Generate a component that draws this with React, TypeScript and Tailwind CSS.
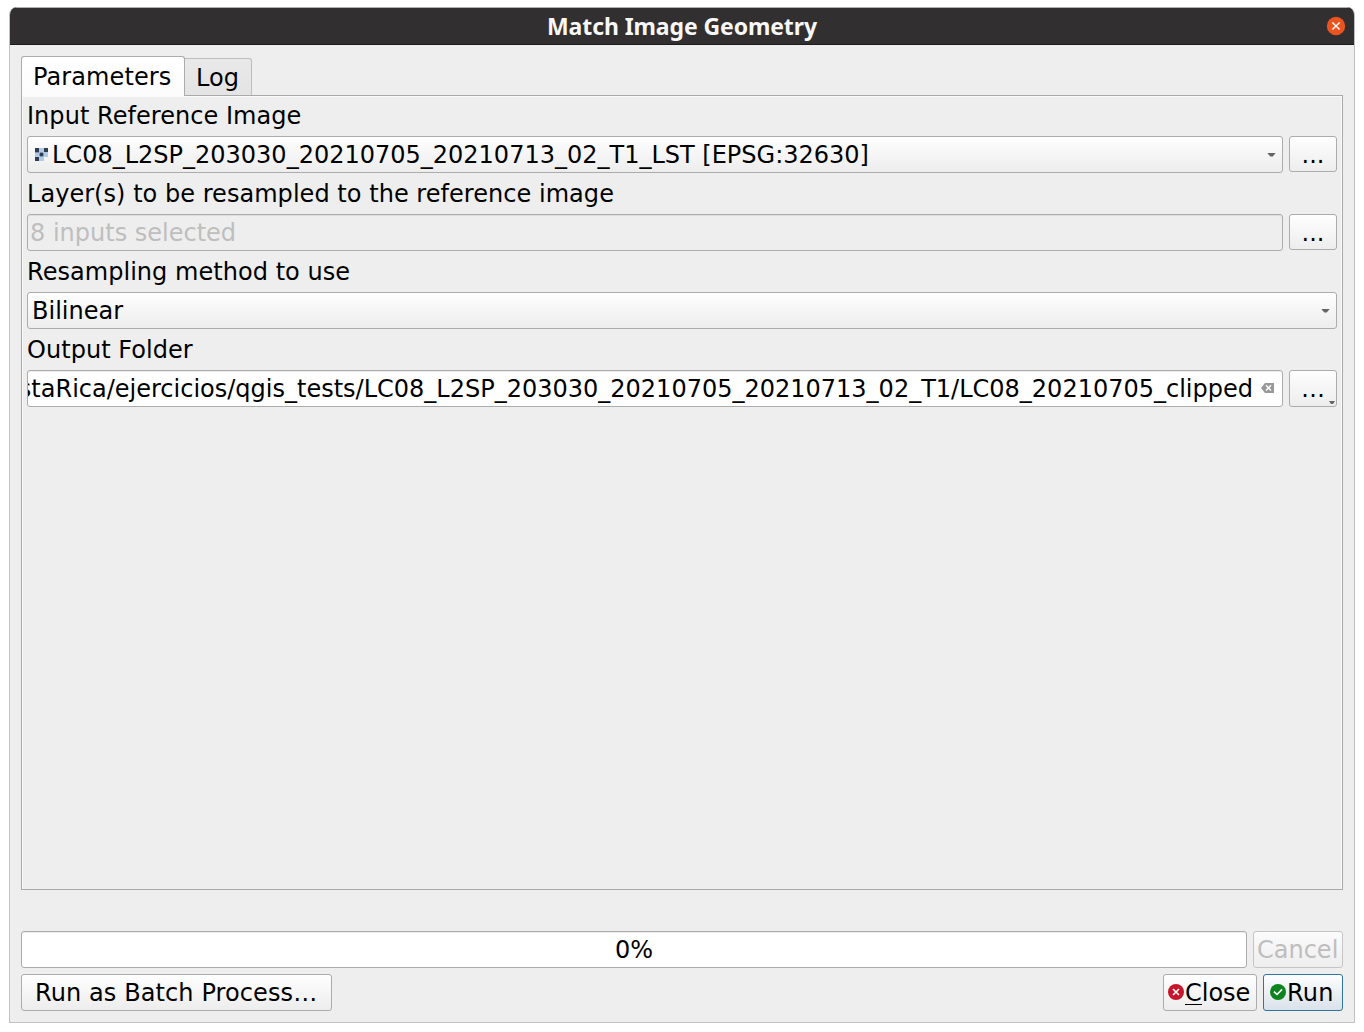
import type { ReactNode } from "react";

const raised =
  "relative flex shrink-0 items-center rounded-[3px] border border-[#acacac] bg-linear-to-b from-[#fefefe] to-[#ededed]";

function Label({ children, first = false }: { children: ReactNode; first?: boolean }) {
  return (
    <div className={"flex items-center tracking-[0.04px] " + (first ? "h-10 pb-px" : "h-[41px]")}>
      {children}
    </div>
  );
}

function Arrow() {
  return (
    <svg className="absolute top-[16px] right-[6px]" width="9" height="4" viewBox="0 0 9 4">
      <path d="M0.3 0H8.7L5.7 3.6H3.3Z" fill="#656565" />
    </svg>
  );
}

function Dots({ menu = false }: { menu?: boolean }) {
  return (
    <button className={raised + " w-12 justify-center " + (menu ? "h-[37px]" : "h-9")}>
      <span className={menu ? "" : "pt-px"}>{menu ? "…" : "..."}</span>
      {menu && (
        <svg className="absolute right-[1px] bottom-[2px]" width="6" height="3" viewBox="0 0 6 3">
          <path d="M0 0H6L4 3H2Z" fill="#656565" />
        </svg>
      )}
    </button>
  );
}

function RasterIcon() {
  return (
    <svg width="13" height="13" viewBox="0 0 13 13" shapeRendering="crispEdges">
      <rect width="13" height="13" fill="#b3cae6" />
      <path d="M0 0h4v4H0zM9 0h4v4H9zM0 9h4v4H0z" fill="#2f3e50" />
      <path d="M5 5h3v3H5z" fill="#2f3e50" />
      <path d="M0 4h4v1H0zM4 5h1v3H4zM8 5h1v3H8zM5 4h3v1H5zM5 8h3v1H5z" fill="#8297b2" />
      <path d="M9 9h4v4H9z" fill="#f5f5f5" />
    </svg>
  );
}

export default function App() {
  return (
    <div className="h-[1032px] w-[1364px] overflow-hidden bg-white pt-[7px] pl-[9px] font-['DejaVu_Sans',sans-serif] text-[24px] leading-[28px] whitespace-nowrap text-black">
      <div className="flex h-[1016px] w-[1346px] flex-col overflow-hidden rounded-t-[8px] border border-t-0 border-[#c1c1c1] bg-[#eeeeee]">
        <header className="relative flex h-[38px] shrink-0 items-center justify-center border-t border-b border-t-[#b0b0b0] border-b-[#1c1b1b] bg-[#322f30] pb-px font-['Noto_Sans',sans-serif] text-[23px] font-bold text-[#f7f7f7]">
          <span className="tracking-[-0.1px]">Match Image Geometry</span>
          <svg className="absolute top-[8px] right-[8px]" width="20" height="20" viewBox="0 0 20 20">
            <circle cx="10" cy="10" r="9.2" fill="#e95420" />
            <path d="M6.4 6.4L13.6 13.6M13.6 6.4L6.4 13.6" stroke="#fff" strokeWidth="1.4" />
          </svg>
        </header>

        <main className="flex flex-1 flex-col px-[11px] pt-[11px]">
          <nav className="relative z-10 -mb-px flex h-10 items-end">
            <div className="flex h-10 w-[164px] items-center rounded-t-[3px] border border-b-0 border-[#acacac] bg-linear-to-b from-white to-[#fbfbfb] pl-[11px] tracking-[0.1px]">
              Parameters
            </div>
            <div className="mb-px flex h-[37px] w-[67px] items-center rounded-tr-[3px] border border-b-0 border-l-0 border-[#bdbdbd] bg-linear-to-b from-[#e9e9e9] to-[#e4e4e4] pt-[2px] pl-[11px]">
              Log
            </div>
          </nav>
          <section className="h-[795px] border border-[#a9a9a9] px-[5px] shadow-[inset_1px_1px_0_#fafafa,inset_-1px_0_0_#fafafa]">
            <Label first>Input Reference Image</Label>
            <div className="flex h-[37px] gap-[6px]">
              <div className={raised + " h-[37px] w-[1256px] gap-[4px] pl-[7px]"}>
                <RasterIcon />
                <span>LC08_L2SP_203030_20210705_20210713_02_T1_LST [EPSG:32630]</span>
                <Arrow />
              </div>
              <Dots />
            </div>
            <Label>Layer(s) to be resampled to the reference image</Label>
            <div className="flex h-[37px] gap-[6px]">
              <div className="flex h-[37px] w-[1256px] items-center rounded-[3px] border border-[#acacac] bg-[#eeeeee] pl-[2px] text-[#bebebe] shadow-[inset_0_1px_0_#dedede]">
                8 inputs selected
              </div>
              <Dots />
            </div>
            <Label>Resampling method to use</Label>
            <div className={raised + " h-[37px] pl-[4px]"}>
              Bilinear
              <Arrow />
            </div>
            <Label>Output Folder</Label>
            <div className="flex h-[37px] gap-[6px]">
              <div className="flex h-[37px] w-[1256px] items-center rounded-[3px] border border-[#acacac] bg-white pr-[7px] shadow-[inset_0_1px_0_#ededed]">
                <div className="flex flex-1 justify-end overflow-hidden">
                  <span>staRica/ejercicios/qgis_tests/LC08_L2SP_203030_20210705_20210713_02_T1/LC08_20210705_clipped</span>
                </div>
                <svg className="mr-px mb-[1px] ml-[8px] shrink-0" width="13" height="10" viewBox="0 0 13 10">
                  <path d="M4 0H13V10H4L0 5Z" fill="#989898" />
                  <path d="M5 2.3L10 7.5M10 2.3L5 7.5" stroke="#fff" strokeWidth="1.4" />
                </svg>
              </div>
              <Dots menu />
            </div>
          </section>

          <div className="mt-[41px] flex h-[37px] gap-[6px]">
            <div className="flex w-[1226px] items-center justify-center rounded-[3px] border border-[#acacac] bg-white shadow-[inset_0_1px_0_#ededed]">
              0%
            </div>
            <button className="flex w-[90px] items-center rounded-[3px] border border-[#c5c5c5] bg-linear-to-b from-[#fbfbfb] to-[#eeeeee] pl-[3px] text-[#bebebe]">
              Cancel
            </button>
          </div>
          <div className="mt-[6px] flex h-[37px] gap-[6px]">
            <button className={raised + " mr-auto w-[311px] pl-[13px] tracking-[0.1px]"}>
              Run as Batch Process…
            </button>
            <button className={raised + " w-[94px] gap-[1px] pl-[4px]"}>
              <svg className="mb-[1px] shrink-0" width="16" height="16" viewBox="0 0 16 16">
                <circle cx="8" cy="8" r="8" fill="#c7162b" />
                <path d="M5 5L11 11M11 5L5 11" stroke="#fff" strokeWidth="1.6" />
              </svg>
              <span>
                <span className="inline-block h-[26px] border-b border-black align-top">C</span>lose
              </span>
            </button>
            <button className="flex w-20 items-center gap-[1px] rounded-[3px] border border-[#30759f] bg-linear-to-b from-[#fdfefe] to-[#dae1ea] pl-[6px]">
              <svg className="mb-[1px] shrink-0" width="16" height="16" viewBox="0 0 16 16">
                <circle cx="8" cy="8" r="8" fill="#0e8420" />
                <path d="M4 7.7L7 10.5L12 5.4" fill="none" stroke="#fff" strokeWidth="1.6" />
              </svg>
              <span className="tracking-[0.2px]">Run</span>
            </button>
          </div>
        </main>
      </div>
    </div>
  );
}
